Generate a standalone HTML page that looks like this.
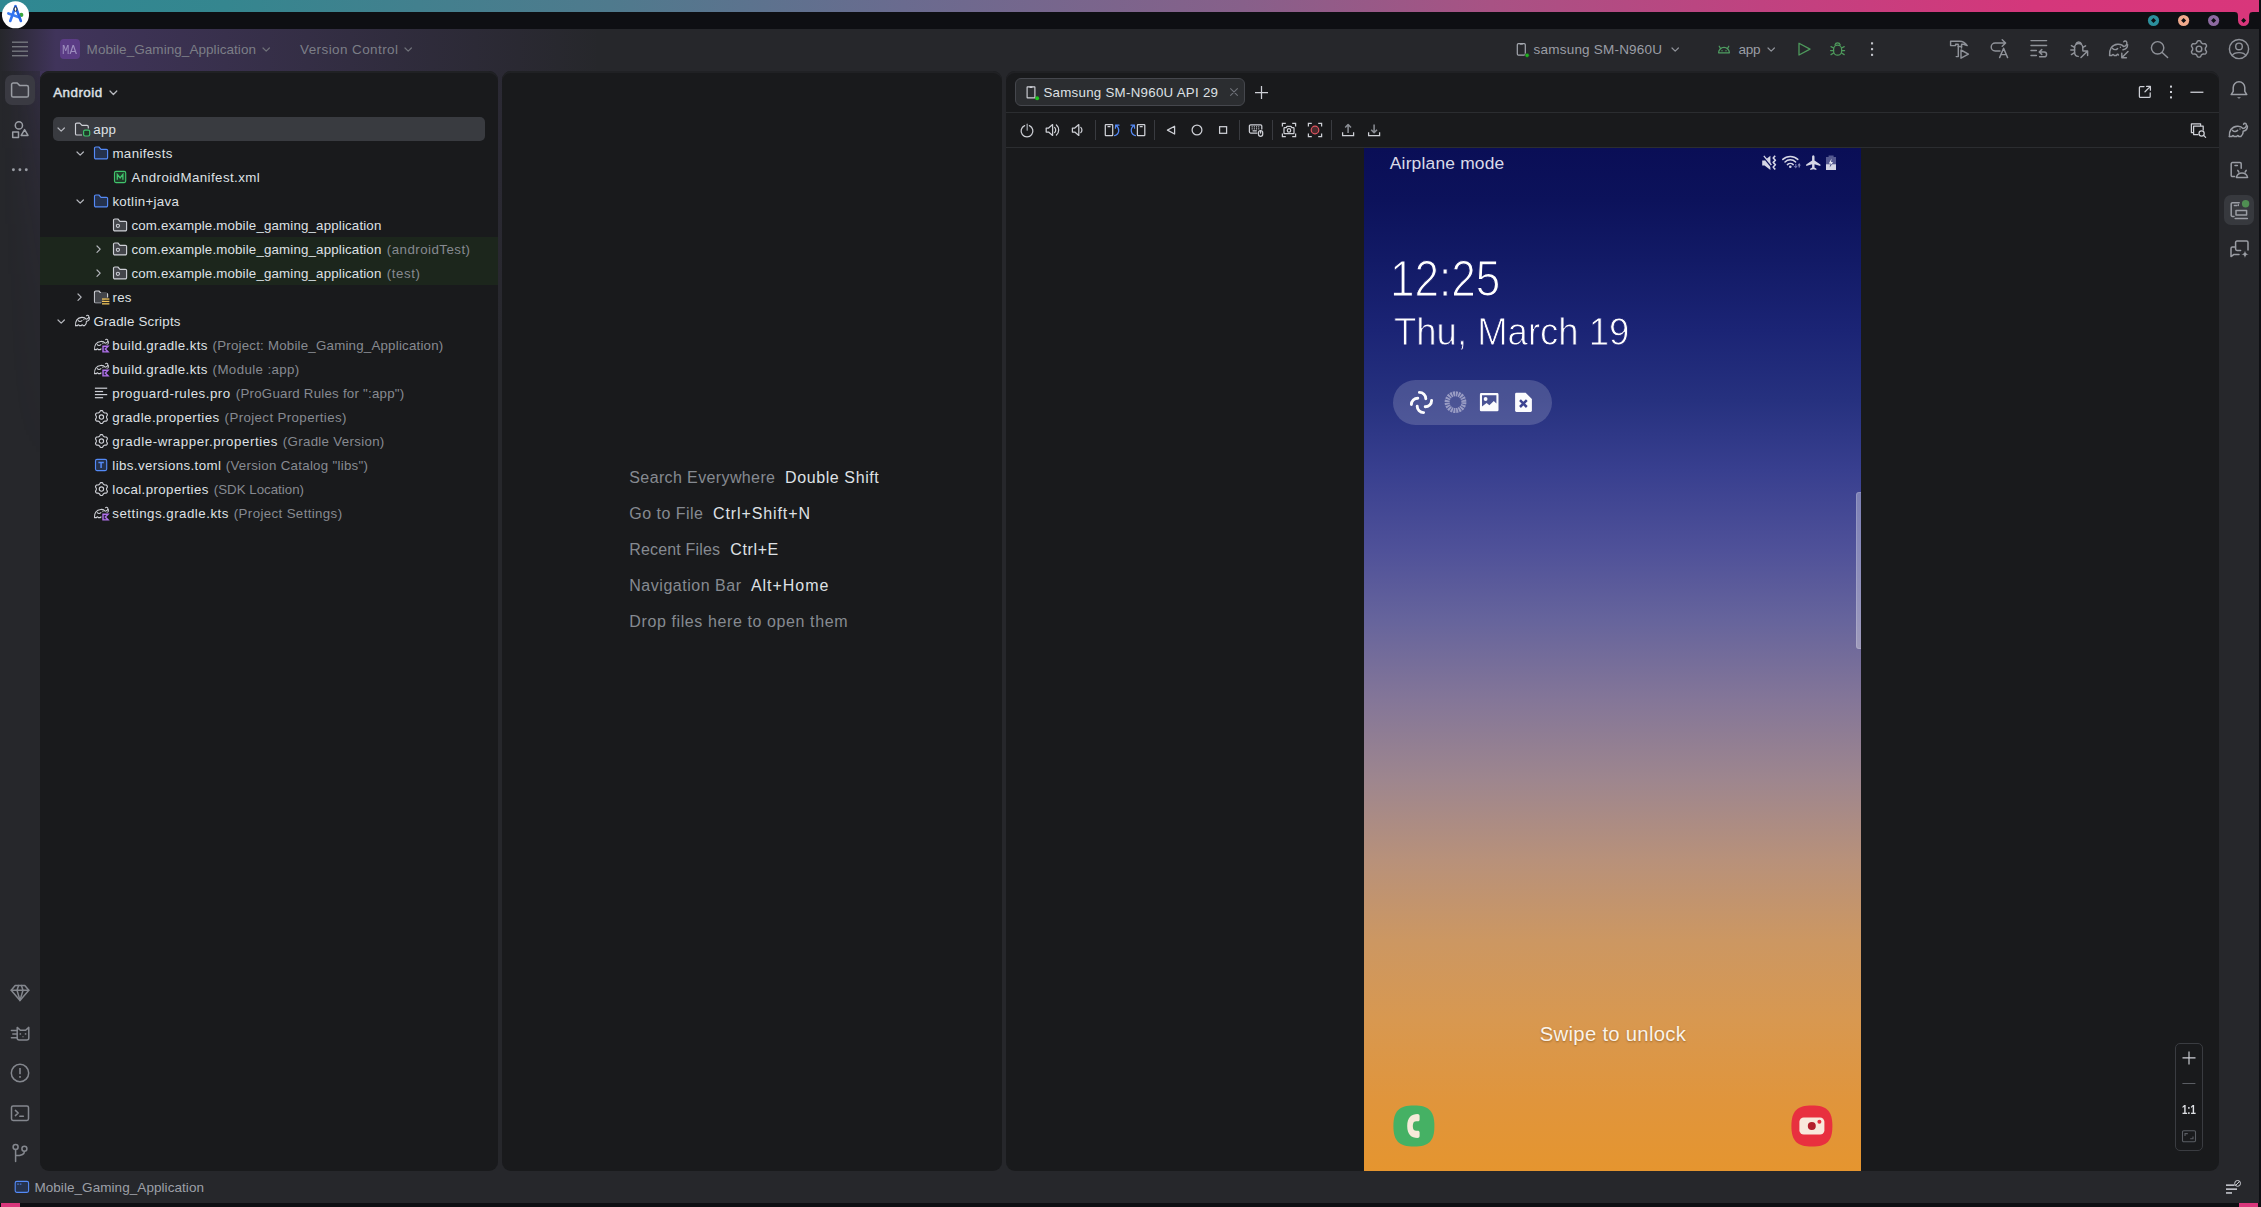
<!DOCTYPE html>
<html>
<head>
<meta charset="utf-8">
<title>Mobile_Gaming_Application</title>
<style>
*{box-sizing:border-box;margin:0;padding:0}
html,body{width:2261px;height:1207px;overflow:hidden;background:#26272b}
body{position:relative;font-family:"Liberation Sans",sans-serif;font-size:13.5px;color:#dfe1e5;-webkit-font-smoothing:antialiased}
.abs{position:absolute}
#topgrad{left:0;top:0;width:2259px;height:12px;background:linear-gradient(90deg,#2f8892 0%,#35868f 10%,#4f7a8d 27%,#6a6b8f 40%,#87608a 55%,#a85284 66%,#c04280 78%,#d4377b 90%,#d9367b 100%)}
#topblack{left:0;top:12px;width:2261px;height:17px;background:#0e0f13}
#rightblack{left:2259px;top:0;width:2px;height:1207px;background:#0e0f13}
#botblack{left:0;top:1203px;width:2261px;height:4px;background:#0e0f13}
#titlebar{left:0;top:29px;width:2259px;height:42px;background:#26272b;overflow:hidden}
#frame{left:0;top:29px;width:2259px;height:1174px;background:#26272b;overflow:hidden}
#purple{left:0;top:0;width:2259px;height:42px;background:linear-gradient(90deg,rgba(128,84,208,0) 0,rgba(128,84,208,.29) 56px,rgba(128,84,208,0) 600px,rgba(128,84,208,0) 100%)}
#purple2{left:40px;top:42px;width:760px;height:560px;background:radial-gradient(circle 548px at 16px -21px,rgba(128,84,208,.27) 0,rgba(128,84,208,0) 100%)}
#purple3{left:0;top:42px;width:40px;height:400px;background:linear-gradient(90deg,rgba(128,84,208,0) 0,rgba(128,84,208,.012) 25%,rgba(128,84,208,.042) 50%,rgba(128,84,208,.09) 75%,rgba(128,84,208,.15) 100%);-webkit-mask-image:linear-gradient(180deg,#000 0,rgba(0,0,0,.71) 38px,rgba(0,0,0,.5) 76px,rgba(0,0,0,.25) 152px,rgba(0,0,0,.12) 230px,transparent 400px);mask-image:linear-gradient(180deg,#000 0,rgba(0,0,0,.71) 38px,rgba(0,0,0,.5) 76px,rgba(0,0,0,.25) 152px,rgba(0,0,0,.12) 230px,transparent 400px)}
.panel{background:#191a1c;border-radius:9px;top:71px;height:1100px;overflow:hidden;box-shadow:inset 0 2px 0 #202124}
#pLeft{left:40px;width:458px}
#pMid{left:502px;width:500px}
#pRight{left:1006px;width:1213px}
.t{position:absolute;white-space:pre;line-height:20px;height:20px}
.g{color:#868a91}
svg{position:absolute;overflow:visible}
</style>
</head>
<body>
<div id="frame" class="abs"><div id="purple" class="abs"></div><div id="purple2" class="abs"></div><div id="purple3" class="abs"></div></div>
<div id="topgrad" class="abs"></div>
<div id="topblack" class="abs"></div>
<div id="rightblack" class="abs"></div>
<div id="botblack" class="abs"></div>

<!-- PANELS -->
<div id="pLeft" class="abs panel"></div>
<div id="pMid" class="abs panel"></div>
<div id="pRight" class="abs panel"></div>

<!--TITLEBAR-->
<svg style="left:1px;top:0px;" width="30" height="30" viewBox="0 0 30 30" fill="none">
<circle cx="14.5" cy="14.8" r="13.55" fill="#fff"/>
<circle cx="20.3" cy="14.9" r="2.1" fill="#3aa63c"/>
<path d="M7.4 13.5 L18 17.2" stroke="#3b7df3" stroke-width="2.7" stroke-linecap="round"/>
<path d="M14.5 6.4 L9.3 20.9" stroke="#3274f0" stroke-width="2.7" stroke-linecap="round"/>
<path d="M14.5 6.4 L19.8 20.9" stroke="#2766e6" stroke-width="2.7" stroke-linecap="round"/>
<path d="M14.5 4.6 L13.3 7.4 H15.7 Z" fill="#2f6fed"/>
<ellipse cx="14.5" cy="9.1" rx="1.45" ry="2.1" fill="#fff" stroke="#20242f" stroke-width="1"/>
</svg>
<svg style="left:2140px;top:12px;" width="119" height="17" viewBox="0 0 119 17" fill="none"><circle cx="13.5" cy="8.5" r="5.6" fill="#2b8f9c"/><path d="M13.5 6.0 L16.0 8.5 L13.5 11.0 L11.0 8.5 Z" fill="#0e0f13"/><circle cx="43.6" cy="8.5" r="5.6" fill="#f0a98c"/><path d="M43.6 6.0 L46.1 8.5 L43.6 11.0 L41.1 8.5 Z" fill="#0e0f13"/><circle cx="73.6" cy="8.5" r="5.6" fill="#8d69a0"/><path d="M73.6 6.0 L76.1 8.5 L73.6 11.0 L71.1 8.5 Z" fill="#0e0f13"/><path d="M94.6 0 C98.6 0 98 3 98 8.5 A5.6 5.6 0 0 0 109.2 8.5 C109.2 3 108.6 0 112.8 0 Z" fill="#d9367b"/><path d="M103.6 6.0 L106.1 8.5 L103.6 11.0 L101.1 8.5 Z" fill="#0e0f13"/></svg>
<svg style="left:12px;top:40px;" width="16" height="18" viewBox="0 0 16 18" fill="none"><rect x="0" y="1.5" width="16" height="1.4" fill="#75777e"/><rect x="0" y="6.0" width="16" height="1.4" fill="#75777e"/><rect x="0" y="10.5" width="16" height="1.4" fill="#75777e"/><rect x="0" y="15.0" width="16" height="1.4" fill="#75777e"/></svg>
<div class="abs" style="left:60px;top:39px;width:20px;height:20px;border-radius:4px;background:#5b3c85"></div>
<div class="t" style="left:62.0px;top:39.7px;font-size:13.3px;line-height:21px;height:21px;color:#9c8cbd;font-family:'Liberation Mono',monospace;transform-origin:0 50%;transform:scaleX(.93)">MA</div>
<div class="t" style="left:86.6px;top:39.5px;font-size:13.5px;line-height:20px;height:20px;color:#7c7e87;letter-spacing:0.054px;">Mobile_Gaming_Application</div>
<svg style="left:262.3px;top:46.9px;" width="8.4" height="5.2" viewBox="0 0 8.4 5.2" fill="none"><path d="M1 1 L4.2 4.2 L7.4 1" stroke="#6f7179" stroke-width="1.2" stroke-linecap="round" stroke-linejoin="round"/></svg>
<div class="t" style="left:300.0px;top:39.5px;font-size:13.5px;line-height:20px;height:20px;color:#7c7e87;letter-spacing:0.407px;">Version Control</div>
<svg style="left:403.8px;top:46.9px;" width="8.4" height="5.2" viewBox="0 0 8.4 5.2" fill="none"><path d="M1 1 L4.2 4.2 L7.4 1" stroke="#6f7179" stroke-width="1.2" stroke-linecap="round" stroke-linejoin="round"/></svg>
<svg style="left:1515px;top:41px;" width="16" height="18" viewBox="0 0 16 18" fill="none">
<rect x="2.3" y="2.6" width="8" height="11.6" rx="1.2" stroke="#a4a7ae" stroke-width="1.2"/>
<path d="M4.8 2.9 H7.8" stroke="#a4a7ae" stroke-width="1.6"/>
<circle cx="12.1" cy="14.3" r="2.1" fill="#1fb11f" stroke="#26282b" stroke-width="0.5"/></svg>
<div class="t" style="left:1533.6px;top:39.5px;font-size:13.5px;line-height:20px;height:20px;color:#9b9ea6;letter-spacing:0.207px;">samsung SM-N960U</div>
<svg style="left:1670.8px;top:46.699999999999996px;" width="8.4" height="5.2" viewBox="0 0 8.4 5.2" fill="none"><path d="M1 1 L4.2 4.2 L7.4 1" stroke="#8f9299" stroke-width="1.2" stroke-linecap="round" stroke-linejoin="round"/></svg>
<svg style="left:1716px;top:42px;" width="16" height="14" viewBox="0 0 16 14" fill="none">
<path d="M2.6 10.8 A5.4 5.4 0 0 1 13.4 10.8 Z" stroke="#4f9e62" stroke-width="1.2" stroke-linejoin="round"/>
<path d="M4.6 6.6 L3.2 4.2 M11.4 6.6 L12.8 4.2" stroke="#4f9e62" stroke-width="1.2" stroke-linecap="round"/>
<circle cx="6" cy="8.7" r=".7" fill="#4f9e62"/><circle cx="10" cy="8.7" r=".7" fill="#4f9e62"/></svg>
<div class="t" style="left:1738.6px;top:39.5px;font-size:13.5px;line-height:20px;height:20px;color:#9b9ea6;letter-spacing:-0.312px;">app</div>
<svg style="left:1766.8px;top:46.699999999999996px;" width="8.4" height="5.2" viewBox="0 0 8.4 5.2" fill="none"><path d="M1 1 L4.2 4.2 L7.4 1" stroke="#8f9299" stroke-width="1.2" stroke-linecap="round" stroke-linejoin="round"/></svg>
<svg style="left:1796px;top:40px;" width="18" height="18" viewBox="0 0 18 18" fill="none"><path d="M3 3.2 V15 L14 9.1 Z" stroke="#4e9a5c" stroke-width="1.3" stroke-linejoin="round"/></svg>
<svg style="left:1828px;top:39px;" width="20" height="20" viewBox="0 0 20 20" fill="none">
<g stroke="#4e9a5c" stroke-width="1.25" stroke-linecap="round" fill="none">
<rect x="5.6" y="6.2" width="8" height="10" rx="4"/>
<path d="M7 5.9 A2.7 2.7 0 0 1 12.2 5.9"/>
<path d="M5.6 9 L3 7.6 M5.6 11.6 H2.6 M5.6 14 L3 15.6 M13.6 9 L16.2 7.6 M13.6 11.6 H16.6 M13.6 14 L16.2 15.6"/>
</g></svg>
<svg style="left:1870px;top:41px;" width="4" height="16" viewBox="0 0 4 16" fill="none"><rect x="1" y="1.3" width="2.1" height="2.1" fill="#c3c5cb"/><rect x="1" y="7.1" width="2.1" height="2.1" fill="#c3c5cb"/><rect x="1" y="12.8" width="2.1" height="2.1" fill="#c3c5cb"/></svg>
<svg style="left:1949px;top:39px;" width="22" height="21" viewBox="0 0 22 21" fill="none"><g stroke="#8f9299" stroke-width="1.45" stroke-linecap="round" stroke-linejoin="round" fill="none">
<path d="M1.6 2.2 H10.6 C13.6 2.2 16.4 3.8 18.2 6.6 L14.6 5.2 H12.6 V7.4 H9.2 V5.2 H6.6 V6.6 H1.6 Z"/>
<path d="M9.3 7.4 V17.6 H7.2 M12.5 7.4 V9"/>
<path d="M12 11 V19.2 L19.4 15.1 Z"/>
</g></svg>
<svg style="left:1989px;top:38px;" width="22" height="22" viewBox="0 0 22 22" fill="none"><g stroke="#8f9299" stroke-width="1.45" stroke-linecap="round" stroke-linejoin="round" fill="none">
<path d="M11 13 H6.2 A4 4 0 0 1 6.2 5 H16.4 M13.2 1.8 L16.6 5 L13.2 8.2"/>
<path d="M10.6 19.6 L14.6 10.2 L18.6 19.6 M12 16.6 H17.2"/>
</g></svg>
<svg style="left:2030px;top:39px;" width="20" height="20" viewBox="0 0 20 20" fill="none"><g stroke="#8f9299" stroke-width="1.45" stroke-linecap="round" stroke-linejoin="round" fill="none">
<path d="M1 1.6 H16.6 M1 6.4 H16.6 M1 11.4 H6.4 M1 16.4 H6.4"/>
<path d="M9.4 13 H14.2 A2.4 2.4 0 0 1 14.2 17.8 H9.6 M11.8 10.6 L9.2 13 L11.8 15.4"/>
</g></svg>
<svg style="left:2068px;top:38px;" width="22" height="22" viewBox="0 0 22 22" fill="none"><g stroke="#8f9299" stroke-width="1.45" stroke-linecap="round" stroke-linejoin="round" fill="none">
<path d="M14.8 12.2 V9.6 A4.1 4.1 0 0 0 6.6 9.6 V14.4 A4.1 4.1 0 0 0 10.2 18.4"/>
<path d="M8 6 A2.8 2.8 0 0 1 13.4 6"/>
<path d="M6.6 9.4 L3.4 7.6 M6.6 12 H2.8 M6.6 14.6 L3.4 16.6 M14.8 9.4 L17.6 7.8"/>
<path d="M13 19.6 L19.4 13.2 M15 13 H19.6 V17.6"/>
</g></svg>
<svg style="left:2107px;top:38px;" width="24" height="22" viewBox="0 0 24 22" fill="none"><g stroke="#8f9299" stroke-width="1.45" stroke-linecap="round" stroke-linejoin="round" fill="none">
<path d="M2.6 17.4 C2 11.6 4.6 6.6 10.6 6.2 C13.4 6 15.6 7 16.6 8.6 C18.6 8.2 20.4 6.6 19.8 4.4 C19.4 2.8 17.4 2.6 16.8 3.8"/>
<path d="M2.6 17.4 H5 C5.4 16 6.6 16 7 17.4 H9.6 C10 16 11 16 11.4 17"/>
<path d="M20.6 6.6 C20.6 9.6 18.8 11.4 16 11.8"/>
<path d="M5.6 10.4 C7 12 9 12 10.6 10.6"/>
<path d="M21 13.6 L15 19.6 M14.8 15.2 V19.8 H19.4"/>
</g><circle cx="13.4" cy="9.2" r=".7" fill="#8f9299"/></svg>
<svg style="left:2149px;top:39px;" width="22" height="22" viewBox="0 0 22 22" fill="none"><g stroke="#8f9299" stroke-width="1.45" stroke-linecap="round" stroke-linejoin="round" fill="none"><circle cx="8.6" cy="8.8" r="6.2"/><path d="M13.2 13.4 L18.6 18.6"/></g></svg>
<svg style="left:2189px;top:39px;" width="20" height="20" viewBox="0 0 20 20" fill="none"><g stroke="#8f9299" stroke-width="1.45" stroke-linecap="round" stroke-linejoin="round" fill="none"><path d="M16.35 9.90 L16.37 9.48 L16.43 9.05 L16.55 8.60 L17.05 8.01 L17.50 7.36 L17.50 6.80 L17.37 6.27 L17.14 5.78 L16.83 5.34 L16.44 4.96 L15.95 4.68 L15.16 4.74 L14.41 4.88 L13.95 4.75 L13.55 4.59 L13.18 4.40 L12.82 4.18 L12.48 3.91 L12.15 3.57 L11.89 2.85 L11.54 2.14 L11.06 1.86 L10.54 1.70 L10.00 1.65 L9.46 1.70 L8.94 1.86 L8.46 2.14 L8.11 2.85 L7.85 3.57 L7.52 3.91 L7.18 4.18 L6.83 4.40 L6.45 4.59 L6.05 4.75 L5.59 4.88 L4.84 4.74 L4.05 4.68 L3.56 4.96 L3.17 5.34 L2.86 5.78 L2.63 6.27 L2.50 6.80 L2.50 7.36 L2.95 8.01 L3.45 8.60 L3.57 9.05 L3.63 9.48 L3.65 9.90 L3.63 10.32 L3.57 10.75 L3.45 11.20 L2.95 11.79 L2.50 12.44 L2.50 13.00 L2.63 13.53 L2.86 14.02 L3.17 14.46 L3.56 14.84 L4.05 15.12 L4.84 15.06 L5.59 14.92 L6.05 15.05 L6.45 15.21 L6.82 15.40 L7.18 15.62 L7.52 15.89 L7.85 16.23 L8.11 16.95 L8.46 17.66 L8.94 17.94 L9.46 18.10 L10.00 18.15 L10.54 18.10 L11.06 17.94 L11.54 17.66 L11.89 16.95 L12.15 16.23 L12.48 15.89 L12.82 15.62 L13.18 15.40 L13.55 15.21 L13.95 15.05 L14.41 14.92 L15.16 15.06 L15.95 15.12 L16.44 14.84 L16.83 14.46 L17.14 14.03 L17.37 13.53 L17.50 13.00 L17.50 12.44 L17.05 11.79 L16.55 11.20 L16.43 10.75 L16.37 10.32 Z" stroke-linejoin="round"/><circle cx="10" cy="9.9" r="2.8"/></g></svg>
<svg style="left:2228px;top:38px;" width="22" height="22" viewBox="0 0 22 22" fill="none"><g stroke="#8f9299" stroke-width="1.45" stroke-linecap="round" stroke-linejoin="round" fill="none"><circle cx="11" cy="11" r="9.6"/><circle cx="11" cy="8.4" r="3.3"/><path d="M4.2 17.6 C6 13.6 16 13.6 17.8 17.6"/></g></svg>
<!--LEFTSTRIPE-->
<div class="abs" style="left:5px;top:75px;width:30px;height:30px;border-radius:7px;background:#3a3a42"></div>
<svg style="left:10px;top:81px;" width="20" height="18" viewBox="0 0 20 18" fill="none"><g stroke="#9a9da4" stroke-width="1.5" stroke-linecap="round" stroke-linejoin="round" fill="none"><path d="M1.6 3.6 A1.6 1.6 0 0 1 3.2 2 H7.2 L9.8 4.6 H16.8 A1.6 1.6 0 0 1 18.4 6.2 V14.4 A1.6 1.6 0 0 1 16.8 16 H3.2 A1.6 1.6 0 0 1 1.6 14.4 Z"/></g></svg>
<svg style="left:10px;top:120px;" width="20" height="20" viewBox="0 0 20 20" fill="none"><g stroke="#9a9da4" stroke-width="1.5" stroke-linecap="round" stroke-linejoin="round" fill="none"><circle cx="8.9" cy="5.4" r="3.6"/><rect x="2.7" y="11.9" width="5.8" height="5.6"/><path d="M14.6 9.6 L18 15.4 H11.2 Z"/></g></svg>
<svg style="left:10px;top:166px;" width="20" height="8" viewBox="0 0 20 8" fill="none"><circle cx="3.4" cy="3.8" r="1.45" fill="#9a9da4"/><circle cx="9.9" cy="3.8" r="1.45" fill="#9a9da4"/><circle cx="16.3" cy="3.8" r="1.45" fill="#9a9da4"/></svg>
<svg style="left:10px;top:983px;" width="20" height="20" viewBox="0 0 20 20" fill="none"><g stroke="#84878e" stroke-width="1.5" stroke-linecap="round" stroke-linejoin="round" fill="none"><path d="M5.2 2.4 H14.8 L18.8 7.2 L10 17.6 L1.2 7.2 Z"/><path d="M1.2 7.2 H18.8 M7 7.2 L10 17.4 L13 7.2 M7 7.2 L8.6 2.4 M13 7.2 L11.4 2.4"/></g></svg>
<svg style="left:10px;top:1025px;" width="20" height="18" viewBox="0 0 20 18" fill="none"><g stroke="#84878e" stroke-width="1.5" stroke-linecap="round" stroke-linejoin="round" fill="none"><path d="M7.2 2.4 L10.4 5.2 H15.6 L18.8 2.4 V13 A2 2 0 0 1 16.8 15 H9.2 A2 2 0 0 1 7.2 13 Z"/><path d="M1.4 5.4 H7 M2.8 9 H7 M1.4 12.7 H7"/></g><rect x="9.6" y="8.2" width="1.5" height="1.5" fill="#84878e"/><rect x="14.8" y="8.2" width="1.5" height="1.5" fill="#84878e"/><path d="M11.8 11.4 H14.2 L13 12.6 Z" fill="#84878e"/></svg>
<svg style="left:10px;top:1063px;" width="20" height="20" viewBox="0 0 20 20" fill="none"><g stroke="#84878e" stroke-width="1.5" stroke-linecap="round" stroke-linejoin="round" fill="none"><circle cx="10" cy="10" r="8.7"/></g><rect x="9.2" y="5" width="1.6" height="6.2" fill="#84878e"/><rect x="9.2" y="13" width="1.6" height="1.8" fill="#84878e"/></svg>
<svg style="left:10px;top:1104px;" width="20" height="18" viewBox="0 0 20 18" fill="none"><g stroke="#84878e" stroke-width="1.5" stroke-linecap="round" stroke-linejoin="round" fill="none"><rect x="1.5" y="2" width="17" height="14.4" rx="1.6"/><path d="M5.4 6.4 L8.2 9 L5.4 11.6 M9.8 12.2 H13.4"/></g></svg>
<svg style="left:10px;top:1143px;" width="20" height="20" viewBox="0 0 20 20" fill="none"><g stroke="#84878e" stroke-width="1.5" stroke-linecap="round" stroke-linejoin="round" fill="none"><circle cx="5.6" cy="4" r="2.5"/><circle cx="14.4" cy="5.8" r="2.5"/><path d="M5.6 6.6 V18.4 M14.4 8.4 C14.4 11.6 12 12.6 5.8 12.6"/></g></svg>
<!--PROJECT-->
<div class="t" style="left:53.2px;top:82.5px;font-size:13.4px;line-height:20px;height:20px;color:#dfe1e5;letter-spacing:0.468px;-webkit-text-stroke:.45px #dfe1e5;">Android</div>
<svg style="left:108.6px;top:90.25px;" width="8.8" height="5.5" viewBox="0 0 8.8 5.5" fill="none"><path d="M1 1 L4.4 4.5 L7.8 1" stroke="#b9bbc1" stroke-width="1.25" stroke-linecap="round" stroke-linejoin="round"/></svg>
<div class="abs" style="left:53px;top:117px;width:432px;height:24px;border-radius:5px;background:#393b40"></div>
<div class="abs" style="left:40px;top:237px;width:458px;height:48px;background:#1c261c"></div>
<svg style="left:56.8px;top:126.6px;" width="8.4" height="5.2" viewBox="0 0 8.4 5.2" fill="none"><path d="M1 1 L4.2 4.2 L7.4 1" stroke="#b4b6bc" stroke-width="1.2" stroke-linecap="round" stroke-linejoin="round"/></svg>
<svg style="left:73.5px;top:121px;" width="18" height="16" viewBox="0 0 18 16" fill="none"><path d="M8 14 H2.8 A1.3 1.3 0 0 1 1.5 12.7 V3.4 A1.3 1.3 0 0 1 2.8 2.1 H5.8 L8 4.4 H13 A1.3 1.3 0 0 1 14.3 5.7 V7.6" stroke="#ced0d6" stroke-width="1.15" stroke-linejoin="round" fill="none"/>
<rect x="9.6" y="9.1" width="6.1" height="5.9" rx="1.4" fill="#1f3a29" stroke="#40c46c" stroke-width="1.15"/></svg>
<div class="t" style="left:93.3px;top:120.0px;font-size:13.3px;line-height:20px;height:20px;color:#dfe1e5;letter-spacing:0.254px;">app</div>
<svg style="left:75.8px;top:150.6px;" width="8.4" height="5.2" viewBox="0 0 8.4 5.2" fill="none"><path d="M1 1 L4.2 4.2 L7.4 1" stroke="#b4b6bc" stroke-width="1.2" stroke-linecap="round" stroke-linejoin="round"/></svg>
<svg style="left:92.5px;top:145px;" width="16" height="16" viewBox="0 0 16 16" fill="none"><path d="M1.5 3.3 A1.3 1.3 0 0 1 2.8 2 H5.9 L8 4.3 H13.3 A1.3 1.3 0 0 1 14.6 5.6 V12.6 A1.3 1.3 0 0 1 13.3 13.9 H2.8 A1.3 1.3 0 0 1 1.5 12.6 Z" fill="#25324d" stroke="#548af7" stroke-width="1.15" stroke-linejoin="round"/></svg>
<div class="t" style="left:112.4px;top:144.0px;font-size:13.3px;line-height:20px;height:20px;color:#dfe1e5;letter-spacing:0.386px;">manifests</div>
<svg style="left:111.5px;top:169px;" width="16" height="16" viewBox="0 0 16 16" fill="none"><rect x="2.5" y="2.4" width="11.2" height="11.2" rx="1.5" fill="#1f3a29" stroke="#40c46c" stroke-width="1.15"/><path d="M5.3 10.8 V5.4 L8.1 9 L10.9 5.4 V10.8" stroke="#40c46c" stroke-width="1.3" stroke-linejoin="miter" fill="none"/></svg>
<div class="t" style="left:131.6px;top:168.0px;font-size:13.3px;line-height:20px;height:20px;color:#dfe1e5;letter-spacing:0.428px;">AndroidManifest.xml</div>
<svg style="left:75.8px;top:198.6px;" width="8.4" height="5.2" viewBox="0 0 8.4 5.2" fill="none"><path d="M1 1 L4.2 4.2 L7.4 1" stroke="#b4b6bc" stroke-width="1.2" stroke-linecap="round" stroke-linejoin="round"/></svg>
<svg style="left:92.5px;top:193px;" width="16" height="16" viewBox="0 0 16 16" fill="none"><path d="M1.5 3.3 A1.3 1.3 0 0 1 2.8 2 H5.9 L8 4.3 H13.3 A1.3 1.3 0 0 1 14.6 5.6 V12.6 A1.3 1.3 0 0 1 13.3 13.9 H2.8 A1.3 1.3 0 0 1 1.5 12.6 Z" fill="#25324d" stroke="#548af7" stroke-width="1.15" stroke-linejoin="round"/></svg>
<div class="t" style="left:112.4px;top:192.0px;font-size:13.3px;line-height:20px;height:20px;color:#dfe1e5;letter-spacing:0.328px;">kotlin+java</div>
<svg style="left:111.5px;top:217px;" width="16" height="16" viewBox="0 0 16 16" fill="none"><path d="M1.5 3.3 A1.3 1.3 0 0 1 2.8 2 H5.9 L8 4.3 H13.3 A1.3 1.3 0 0 1 14.6 5.6 V12.6 A1.3 1.3 0 0 1 13.3 13.9 H2.8 A1.3 1.3 0 0 1 1.5 12.6 Z" fill="#43454a" stroke="#ced0d6" stroke-width="1.15" stroke-linejoin="round"/><circle cx="5.9" cy="8.8" r="1.6" stroke="#ced0d6" stroke-width="1.05"/></svg>
<div class="t" style="left:131.5px;top:216.0px;font-size:13.3px;line-height:20px;height:20px;color:#dfe1e5;letter-spacing:0.164px;">com.example.mobile_gaming_application</div>
<svg style="left:96.0px;top:244.8px;" width="5.2" height="8.4" viewBox="0 0 5.2 8.4" fill="none"><path d="M1 1 L4.2 4.2 L1 7.4" stroke="#b4b6bc" stroke-width="1.2" stroke-linecap="round" stroke-linejoin="round"/></svg>
<svg style="left:111.5px;top:241px;" width="16" height="16" viewBox="0 0 16 16" fill="none"><path d="M1.5 3.3 A1.3 1.3 0 0 1 2.8 2 H5.9 L8 4.3 H13.3 A1.3 1.3 0 0 1 14.6 5.6 V12.6 A1.3 1.3 0 0 1 13.3 13.9 H2.8 A1.3 1.3 0 0 1 1.5 12.6 Z" fill="#43454a" stroke="#ced0d6" stroke-width="1.15" stroke-linejoin="round"/><circle cx="5.9" cy="8.8" r="1.6" stroke="#ced0d6" stroke-width="1.05"/></svg>
<div class="t" style="left:131.5px;top:240.0px;font-size:13.3px;line-height:20px;height:20px;color:#dfe1e5;letter-spacing:0.164px;">com.example.mobile_gaming_application</div>
<div class="t" style="left:386.8px;top:240.0px;font-size:13.3px;line-height:20px;height:20px;color:#878a91;letter-spacing:0.465px;">(androidTest)</div>
<svg style="left:96.0px;top:268.8px;" width="5.2" height="8.4" viewBox="0 0 5.2 8.4" fill="none"><path d="M1 1 L4.2 4.2 L1 7.4" stroke="#b4b6bc" stroke-width="1.2" stroke-linecap="round" stroke-linejoin="round"/></svg>
<svg style="left:111.5px;top:265px;" width="16" height="16" viewBox="0 0 16 16" fill="none"><path d="M1.5 3.3 A1.3 1.3 0 0 1 2.8 2 H5.9 L8 4.3 H13.3 A1.3 1.3 0 0 1 14.6 5.6 V12.6 A1.3 1.3 0 0 1 13.3 13.9 H2.8 A1.3 1.3 0 0 1 1.5 12.6 Z" fill="#43454a" stroke="#ced0d6" stroke-width="1.15" stroke-linejoin="round"/><circle cx="5.9" cy="8.8" r="1.6" stroke="#ced0d6" stroke-width="1.05"/></svg>
<div class="t" style="left:131.5px;top:264.0px;font-size:13.3px;line-height:20px;height:20px;color:#dfe1e5;letter-spacing:0.164px;">com.example.mobile_gaming_application</div>
<div class="t" style="left:386.8px;top:264.0px;font-size:13.3px;line-height:20px;height:20px;color:#878a91;letter-spacing:0.581px;">(test)</div>
<svg style="left:77.4px;top:292.8px;" width="5.2" height="8.4" viewBox="0 0 5.2 8.4" fill="none"><path d="M1 1 L4.2 4.2 L1 7.4" stroke="#b4b6bc" stroke-width="1.2" stroke-linecap="round" stroke-linejoin="round"/></svg>
<svg style="left:92.5px;top:289px;" width="18" height="16" viewBox="0 0 18 16" fill="none"><path d="M8.2 13.7 H2.8 A1.3 1.3 0 0 1 1.5 12.4 V3.3 A1.3 1.3 0 0 1 2.8 2 H5.9 L8 4.3 H13.3 A1.3 1.3 0 0 1 14.6 5.6 V8.4" fill="#43454a" stroke="#ced0d6" stroke-width="1.15" stroke-linejoin="round"/><path d="M1.9 4 H14 V9 H9 V13.4 H1.9Z" fill="#43454a"/><g fill="#f2c55c"><rect x="9" y="9.4" width="7.4" height="1.3"/><rect x="9" y="11.8" width="7.4" height="1.3"/><rect x="9" y="14.2" width="7.4" height="1.3"/></g></svg>
<div class="t" style="left:112.4px;top:288.0px;font-size:13.3px;line-height:20px;height:20px;color:#dfe1e5;letter-spacing:0.312px;">res</div>
<svg style="left:56.8px;top:318.59999999999997px;" width="8.4" height="5.2" viewBox="0 0 8.4 5.2" fill="none"><path d="M1 1 L4.2 4.2 L7.4 1" stroke="#b4b6bc" stroke-width="1.2" stroke-linecap="round" stroke-linejoin="round"/></svg>
<svg style="left:73.5px;top:313px;" width="17" height="16" viewBox="0 0 17 16" fill="none"><g stroke="#ced0d6" stroke-width="1.1" stroke-linecap="round" stroke-linejoin="round" fill="none">
<path d="M1.6 12.6 C1.2 8.2 3.2 4.6 7.8 4.4 C9.8 4.3 11.4 5 12.2 6.2 C13.8 6 15.2 4.8 14.8 3.2 C14.5 2 13 1.9 12.6 2.8"/>
<path d="M1.6 12.6 H3.6 C3.9 11.5 4.9 11.5 5.2 12.6 H7.4 C7.7 11.5 8.7 11.5 9 12.6 H10.6 C12 11.4 12.6 10 12.4 8.4 C14.4 8 15.6 6.6 15.4 4.6"/>
<path d="M4.2 7.6 C5.2 8.8 6.8 8.8 8 7.6"/></g><circle cx="9.9" cy="6.6" r=".6" fill="#ced0d6"/></svg>
<div class="t" style="left:93.4px;top:312.0px;font-size:13.3px;line-height:20px;height:20px;color:#dfe1e5;letter-spacing:0.218px;">Gradle Scripts</div>
<svg style="left:92.5px;top:337px;" width="18" height="17" viewBox="0 0 18 17" fill="none"><g stroke="#ced0d6" stroke-width="1.05" stroke-linecap="round" stroke-linejoin="round" fill="none">
<path d="M1.6 12.6 C1.2 8.2 3.2 4.6 7.8 4.4 C9.8 4.3 11.4 5 12.2 6.2 C13.8 6 15.2 4.8 14.8 3.2 C14.5 2 13 1.9 12.6 2.8"/>
<path d="M1.6 12.6 H3.6 C3.9 11.5 4.9 11.5 5.2 12.6 H7.4 C7.7 11.5 8.7 11.5 9 12.6 H10.6 C12 11.4 12.6 10 12.4 8.4 C14.4 8 15.6 6.6 15.4 4.6"/>
<path d="M4.2 7.6 C5.2 8.8 6.8 8.8 8 7.6"/></g><circle cx="9.9" cy="6.6" r=".6" fill="#ced0d6"/><rect x="8.4" y="7.6" width="9" height="9.4" fill="#191a1c"/><path d="M9.3 8.6 H16.7 L13.3 12.1 L16.7 15.6 H9.3 Z" fill="#b071ea"/><path d="M10.7 10 H13.5 L11.5 12.1 L13.5 14.2 H10.7 Z" fill="#2b2140"/></svg>
<div class="t" style="left:112.3px;top:336.0px;font-size:13.3px;line-height:20px;height:20px;color:#dfe1e5;letter-spacing:0.376px;">build.gradle.kts</div>
<div class="t" style="left:212.6px;top:336.0px;font-size:13.3px;line-height:20px;height:20px;color:#878a91;letter-spacing:0.213px;">(Project: Mobile_Gaming_Application)</div>
<svg style="left:92.5px;top:361px;" width="18" height="17" viewBox="0 0 18 17" fill="none"><g stroke="#ced0d6" stroke-width="1.05" stroke-linecap="round" stroke-linejoin="round" fill="none">
<path d="M1.6 12.6 C1.2 8.2 3.2 4.6 7.8 4.4 C9.8 4.3 11.4 5 12.2 6.2 C13.8 6 15.2 4.8 14.8 3.2 C14.5 2 13 1.9 12.6 2.8"/>
<path d="M1.6 12.6 H3.6 C3.9 11.5 4.9 11.5 5.2 12.6 H7.4 C7.7 11.5 8.7 11.5 9 12.6 H10.6 C12 11.4 12.6 10 12.4 8.4 C14.4 8 15.6 6.6 15.4 4.6"/>
<path d="M4.2 7.6 C5.2 8.8 6.8 8.8 8 7.6"/></g><circle cx="9.9" cy="6.6" r=".6" fill="#ced0d6"/><rect x="8.4" y="7.6" width="9" height="9.4" fill="#191a1c"/><path d="M9.3 8.6 H16.7 L13.3 12.1 L16.7 15.6 H9.3 Z" fill="#b071ea"/><path d="M10.7 10 H13.5 L11.5 12.1 L13.5 14.2 H10.7 Z" fill="#2b2140"/></svg>
<div class="t" style="left:112.3px;top:360.0px;font-size:13.3px;line-height:20px;height:20px;color:#dfe1e5;letter-spacing:0.376px;">build.gradle.kts</div>
<div class="t" style="left:212.6px;top:360.0px;font-size:13.3px;line-height:20px;height:20px;color:#878a91;letter-spacing:0.386px;">(Module :app)</div>
<svg style="left:92.5px;top:385px;" width="16" height="16" viewBox="0 0 16 16" fill="none"><rect x="1.9" y="2.6" width="12.3" height="1.2" fill="#ced0d6"/><rect x="1.9" y="5.9" width="8.2" height="1.2" fill="#ced0d6"/><rect x="1.9" y="9.0" width="12.3" height="1.2" fill="#ced0d6"/><rect x="1.9" y="12.1" width="8.2" height="1.2" fill="#ced0d6"/></svg>
<div class="t" style="left:112.3px;top:384.0px;font-size:13.3px;line-height:20px;height:20px;color:#dfe1e5;letter-spacing:0.499px;">proguard-rules.pro</div>
<div class="t" style="left:235.8px;top:384.0px;font-size:13.3px;line-height:20px;height:20px;color:#878a91;letter-spacing:0.228px;">(ProGuard Rules for ":app")</div>
<svg style="left:92.5px;top:409px;" width="17" height="16" viewBox="0 0 17 16" fill="none"><path d="M13.55 8.05 L13.57 7.60 L13.66 7.13 L14.05 6.55 L14.38 5.89 L14.30 5.32 L14.08 4.80 L13.74 4.35 L13.29 3.99 L12.55 3.95 L11.85 4.00 L11.40 3.84 L11.00 3.63 L10.62 3.39 L10.26 3.08 L9.95 2.45 L9.55 1.83 L9.01 1.62 L8.45 1.55 L7.89 1.62 L7.35 1.83 L6.95 2.45 L6.64 3.08 L6.28 3.39 L5.90 3.63 L5.50 3.84 L5.05 4.00 L4.35 3.95 L3.61 3.99 L3.16 4.35 L2.82 4.80 L2.60 5.32 L2.52 5.89 L2.85 6.55 L3.24 7.13 L3.33 7.60 L3.35 8.05 L3.33 8.50 L3.24 8.97 L2.85 9.55 L2.52 10.21 L2.60 10.78 L2.82 11.30 L3.16 11.75 L3.61 12.11 L4.35 12.15 L5.05 12.10 L5.50 12.26 L5.90 12.47 L6.28 12.71 L6.64 13.02 L6.95 13.65 L7.35 14.27 L7.89 14.48 L8.45 14.55 L9.01 14.48 L9.55 14.27 L9.95 13.65 L10.26 13.02 L10.62 12.71 L11.00 12.47 L11.40 12.26 L11.85 12.10 L12.55 12.15 L13.29 12.11 L13.74 11.75 L14.08 11.30 L14.30 10.78 L14.38 10.21 L14.05 9.55 L13.66 8.97 L13.57 8.50 Z" stroke="#ced0d6" stroke-width="1.15" stroke-linejoin="round"/><circle cx="8.45" cy="8.05" r="2.15" stroke="#ced0d6" stroke-width="1.15"/></svg>
<div class="t" style="left:112.3px;top:408.0px;font-size:13.3px;line-height:20px;height:20px;color:#dfe1e5;letter-spacing:0.443px;">gradle.properties</div>
<div class="t" style="left:224.6px;top:408.0px;font-size:13.3px;line-height:20px;height:20px;color:#878a91;letter-spacing:0.381px;">(Project Properties)</div>
<svg style="left:92.5px;top:433px;" width="17" height="16" viewBox="0 0 17 16" fill="none"><path d="M13.55 8.05 L13.57 7.60 L13.66 7.13 L14.05 6.55 L14.38 5.89 L14.30 5.32 L14.08 4.80 L13.74 4.35 L13.29 3.99 L12.55 3.95 L11.85 4.00 L11.40 3.84 L11.00 3.63 L10.62 3.39 L10.26 3.08 L9.95 2.45 L9.55 1.83 L9.01 1.62 L8.45 1.55 L7.89 1.62 L7.35 1.83 L6.95 2.45 L6.64 3.08 L6.28 3.39 L5.90 3.63 L5.50 3.84 L5.05 4.00 L4.35 3.95 L3.61 3.99 L3.16 4.35 L2.82 4.80 L2.60 5.32 L2.52 5.89 L2.85 6.55 L3.24 7.13 L3.33 7.60 L3.35 8.05 L3.33 8.50 L3.24 8.97 L2.85 9.55 L2.52 10.21 L2.60 10.78 L2.82 11.30 L3.16 11.75 L3.61 12.11 L4.35 12.15 L5.05 12.10 L5.50 12.26 L5.90 12.47 L6.28 12.71 L6.64 13.02 L6.95 13.65 L7.35 14.27 L7.89 14.48 L8.45 14.55 L9.01 14.48 L9.55 14.27 L9.95 13.65 L10.26 13.02 L10.62 12.71 L11.00 12.47 L11.40 12.26 L11.85 12.10 L12.55 12.15 L13.29 12.11 L13.74 11.75 L14.08 11.30 L14.30 10.78 L14.38 10.21 L14.05 9.55 L13.66 8.97 L13.57 8.50 Z" stroke="#ced0d6" stroke-width="1.15" stroke-linejoin="round"/><circle cx="8.45" cy="8.05" r="2.15" stroke="#ced0d6" stroke-width="1.15"/></svg>
<div class="t" style="left:112.3px;top:432.0px;font-size:13.3px;line-height:20px;height:20px;color:#dfe1e5;letter-spacing:0.564px;">gradle-wrapper.properties</div>
<div class="t" style="left:282.8px;top:432.0px;font-size:13.3px;line-height:20px;height:20px;color:#878a91;letter-spacing:0.311px;">(Gradle Version)</div>
<svg style="left:92.5px;top:457px;" width="16" height="16" viewBox="0 0 16 16" fill="none"><rect x="2.5" y="2.4" width="11.2" height="11.2" rx="1.5" fill="#25324d" stroke="#548af7" stroke-width="1.15"/><path d="M5.4 5.6 H10.8 M8.1 5.6 V11" stroke="#548af7" stroke-width="1.5"/></svg>
<div class="t" style="left:112.3px;top:456.0px;font-size:13.3px;line-height:20px;height:20px;color:#dfe1e5;letter-spacing:0.388px;">libs.versions.toml</div>
<div class="t" style="left:225.7px;top:456.0px;font-size:13.3px;line-height:20px;height:20px;color:#878a91;letter-spacing:0.280px;">(Version Catalog "libs")</div>
<svg style="left:92.5px;top:481px;" width="17" height="16" viewBox="0 0 17 16" fill="none"><path d="M13.55 8.05 L13.57 7.60 L13.66 7.13 L14.05 6.55 L14.38 5.89 L14.30 5.32 L14.08 4.80 L13.74 4.35 L13.29 3.99 L12.55 3.95 L11.85 4.00 L11.40 3.84 L11.00 3.63 L10.62 3.39 L10.26 3.08 L9.95 2.45 L9.55 1.83 L9.01 1.62 L8.45 1.55 L7.89 1.62 L7.35 1.83 L6.95 2.45 L6.64 3.08 L6.28 3.39 L5.90 3.63 L5.50 3.84 L5.05 4.00 L4.35 3.95 L3.61 3.99 L3.16 4.35 L2.82 4.80 L2.60 5.32 L2.52 5.89 L2.85 6.55 L3.24 7.13 L3.33 7.60 L3.35 8.05 L3.33 8.50 L3.24 8.97 L2.85 9.55 L2.52 10.21 L2.60 10.78 L2.82 11.30 L3.16 11.75 L3.61 12.11 L4.35 12.15 L5.05 12.10 L5.50 12.26 L5.90 12.47 L6.28 12.71 L6.64 13.02 L6.95 13.65 L7.35 14.27 L7.89 14.48 L8.45 14.55 L9.01 14.48 L9.55 14.27 L9.95 13.65 L10.26 13.02 L10.62 12.71 L11.00 12.47 L11.40 12.26 L11.85 12.10 L12.55 12.15 L13.29 12.11 L13.74 11.75 L14.08 11.30 L14.30 10.78 L14.38 10.21 L14.05 9.55 L13.66 8.97 L13.57 8.50 Z" stroke="#ced0d6" stroke-width="1.15" stroke-linejoin="round"/><circle cx="8.45" cy="8.05" r="2.15" stroke="#ced0d6" stroke-width="1.15"/></svg>
<div class="t" style="left:112.3px;top:480.0px;font-size:13.3px;line-height:20px;height:20px;color:#dfe1e5;letter-spacing:0.394px;">local.properties</div>
<div class="t" style="left:213.8px;top:480.0px;font-size:13.3px;line-height:20px;height:20px;color:#878a91;letter-spacing:0.001px;">(SDK Location)</div>
<svg style="left:92.5px;top:505px;" width="18" height="17" viewBox="0 0 18 17" fill="none"><g stroke="#ced0d6" stroke-width="1.05" stroke-linecap="round" stroke-linejoin="round" fill="none">
<path d="M1.6 12.6 C1.2 8.2 3.2 4.6 7.8 4.4 C9.8 4.3 11.4 5 12.2 6.2 C13.8 6 15.2 4.8 14.8 3.2 C14.5 2 13 1.9 12.6 2.8"/>
<path d="M1.6 12.6 H3.6 C3.9 11.5 4.9 11.5 5.2 12.6 H7.4 C7.7 11.5 8.7 11.5 9 12.6 H10.6 C12 11.4 12.6 10 12.4 8.4 C14.4 8 15.6 6.6 15.4 4.6"/>
<path d="M4.2 7.6 C5.2 8.8 6.8 8.8 8 7.6"/></g><circle cx="9.9" cy="6.6" r=".6" fill="#ced0d6"/><rect x="8.4" y="7.6" width="9" height="9.4" fill="#191a1c"/><path d="M9.3 8.6 H16.7 L13.3 12.1 L16.7 15.6 H9.3 Z" fill="#b071ea"/><path d="M10.7 10 H13.5 L11.5 12.1 L13.5 14.2 H10.7 Z" fill="#2b2140"/></svg>
<div class="t" style="left:112.3px;top:504.0px;font-size:13.3px;line-height:20px;height:20px;color:#dfe1e5;letter-spacing:0.495px;">settings.gradle.kts</div>
<div class="t" style="left:233.8px;top:504.0px;font-size:13.3px;line-height:20px;height:20px;color:#878a91;letter-spacing:0.370px;">(Project Settings)</div>
<!--EDITOR-->
<div class="t" style="left:629.3px;top:466.0px;font-size:16px;line-height:24px;height:24px;color:#868a91;letter-spacing:0.380px;">Search Everywhere</div>
<div class="t" style="left:785.0px;top:466.0px;font-size:16px;line-height:24px;height:24px;color:#dfe1e5;letter-spacing:0.603px;">Double Shift</div>
<div class="t" style="left:629.3px;top:502.0px;font-size:16px;line-height:24px;height:24px;color:#868a91;letter-spacing:0.482px;">Go to File</div>
<div class="t" style="left:713.0px;top:502.0px;font-size:16px;line-height:24px;height:24px;color:#dfe1e5;letter-spacing:0.896px;">Ctrl+Shift+N</div>
<div class="t" style="left:629.3px;top:538.0px;font-size:16px;line-height:24px;height:24px;color:#868a91;letter-spacing:0.161px;">Recent Files</div>
<div class="t" style="left:730.3px;top:538.0px;font-size:16px;line-height:24px;height:24px;color:#dfe1e5;letter-spacing:0.620px;">Ctrl+E</div>
<div class="t" style="left:629.3px;top:574.0px;font-size:16px;line-height:24px;height:24px;color:#868a91;letter-spacing:0.519px;">Navigation Bar</div>
<div class="t" style="left:751.0px;top:574.0px;font-size:16px;line-height:24px;height:24px;color:#dfe1e5;letter-spacing:0.943px;">Alt+Home</div>
<div class="t" style="left:629.3px;top:610.0px;font-size:16px;line-height:24px;height:24px;color:#868a91;letter-spacing:0.604px;">Drop files here to open them</div>
<!--DEVICE-->
<div class="abs" style="left:1015px;top:78px;width:230px;height:28px;border-radius:6px;background:#2b2d30;border:1px solid #45474d"></div>
<svg style="left:1025px;top:85px;" width="16" height="16" viewBox="0 0 16 16" fill="none"><rect x="2.1" y="1.9" width="7.8" height="11" rx=".3" stroke="#ced0d6" stroke-width="1.15"/><path d="M4.6 2.2 H7.4" stroke="#ced0d6" stroke-width="1.5"/><circle cx="12.1" cy="13.3" r="2" fill="#1fc41f"/></svg>
<div class="t" style="left:1043.4px;top:83.0px;font-size:13.3px;line-height:20px;height:20px;color:#dfe1e5;letter-spacing:0.275px;">Samsung SM-N960U API 29</div>
<svg style="left:1229px;top:87px;" width="10" height="10" viewBox="0 0 10 10" fill="none"><path d="M1.6 1.6 L8.4 8.4 M8.4 1.6 L1.6 8.4" stroke="#6f7279" stroke-width="1.1" stroke-linecap="round"/></svg>
<svg style="left:1254px;top:85px;" width="15" height="15" viewBox="0 0 15 15" fill="none"><path d="M7.5 1 V14 M1 7.5 H14" stroke="#ced0d6" stroke-width="1.25"/></svg>
<svg style="left:2137px;top:84px;" width="16" height="16" viewBox="0 0 16 16" fill="none"><g stroke="#ced0d6" stroke-width="1.25" stroke-linecap="round" stroke-linejoin="round" fill="none"><path d="M7 2.6 H3.4 A1 1 0 0 0 2.4 3.6 V12.4 A1 1 0 0 0 3.4 13.4 H12.2 A1 1 0 0 0 13.2 12.4 V8.8"/><path d="M9.6 2.4 H13.4 V6.2 M13.2 2.6 L8 7.8"/></g></svg>
<svg style="left:2169px;top:84px;" width="4" height="16" viewBox="0 0 4 16" fill="none"><rect x="1" y="1.6" width="2" height="2" fill="#ced0d6"/><rect x="1" y="7" width="2" height="2" fill="#ced0d6"/><rect x="1" y="12.4" width="2" height="2" fill="#ced0d6"/></svg>
<svg style="left:2190px;top:91px;" width="14" height="3" viewBox="0 0 14 3" fill="none"><rect x="0.4" y="0.6" width="13" height="1.3" fill="#ced0d6"/></svg>
<div class="abs" style="left:1006px;top:112px;width:1213px;height:1px;background:#2b2d30"></div>
<div class="abs" style="left:1006px;top:147px;width:1213px;height:1px;background:#2b2d30"></div>
<div class="abs" style="left:1095px;top:120px;width:1px;height:20px;background:#393b40"></div>
<div class="abs" style="left:1154px;top:120px;width:1px;height:20px;background:#393b40"></div>
<div class="abs" style="left:1239px;top:120px;width:1px;height:20px;background:#393b40"></div>
<div class="abs" style="left:1272px;top:120px;width:1px;height:20px;background:#393b40"></div>
<div class="abs" style="left:1331px;top:120px;width:1px;height:20px;background:#393b40"></div>
<svg style="left:1019px;top:122px;" width="16" height="16" viewBox="0 0 16 16" fill="none"><g stroke="#ced0d6" stroke-width="1.25" stroke-linecap="round" stroke-linejoin="round" fill="none"><path d="M5.6 3.6 A5.9 5.9 0 1 0 10.4 3.6"/></g><path d="M8.2 2.2 V8.2" stroke="#9a9da4" stroke-width="1.3" stroke-linecap="round"/></svg>
<svg style="left:1044px;top:122px;" width="18" height="16" viewBox="0 0 18 16" fill="none"><g stroke="#ced0d6" stroke-width="1.25" stroke-linecap="round" stroke-linejoin="round" fill="none"><path d="M2.2 6 H4.6 L8.6 2.6 V13.4 L4.6 10 H2.2 Z"/><path d="M10.6 5.4 A3.6 3.6 0 0 1 10.6 10.6 M12.4 3 A6.6 6.6 0 0 1 12.4 13"/></g></svg>
<svg style="left:1070px;top:122px;" width="16" height="16" viewBox="0 0 16 16" fill="none"><g stroke="#ced0d6" stroke-width="1.25" stroke-linecap="round" stroke-linejoin="round" fill="none"><path d="M2.4 6 H4.8 L8.8 2.6 V13.4 L4.8 10 H2.4 Z"/><path d="M10.8 5.4 A3.6 3.6 0 0 1 10.8 10.6"/></g></svg>
<svg style="left:1103px;top:122px;" width="18" height="16" viewBox="0 0 18 16" fill="none"><g stroke="#ced0d6" stroke-width="1.25" stroke-linecap="round" stroke-linejoin="round" fill="none"><rect x="2.3" y="2.6" width="7.4" height="11" rx=".6"/><path d="M5 4.7 H7"/></g><g stroke="#548af7" stroke-width="1.25" stroke-linecap="round" stroke-linejoin="round" fill="none"><path d="M11.6 13.6 C16.4 12.2 17.2 6.4 13 3.2 M12.4 6.2 L12.7 3 L16 3.2"/></g></svg>
<svg style="left:1129px;top:122px;" width="18" height="16" viewBox="0 0 18 16" fill="none"><g stroke="#ced0d6" stroke-width="1.25" stroke-linecap="round" stroke-linejoin="round" fill="none"><rect x="8.4" y="2.6" width="7.4" height="11" rx=".6"/><path d="M11.2 4.7 H13.2"/></g><g stroke="#548af7" stroke-width="1.25" stroke-linecap="round" stroke-linejoin="round" fill="none"><path d="M6.4 13.6 C1.6 12.2 .8 6.4 5 3.2 M5.6 6.2 L5.3 3 L2 3.2"/></g></svg>
<svg style="left:1165px;top:124px;" width="12" height="12" viewBox="0 0 12 12" fill="none"><g stroke="#ced0d6" stroke-width="1.25" stroke-linecap="round" stroke-linejoin="round" fill="none"><path d="M9.6 2.2 V10 L2.4 6.1 Z"/></g></svg>
<svg style="left:1190px;top:123px;" width="14" height="14" viewBox="0 0 14 14" fill="none"><circle cx="7" cy="7" r="4.9" stroke="#ced0d6" stroke-width="1.25"/></svg>
<svg style="left:1217px;top:124px;" width="12" height="12" viewBox="0 0 12 12" fill="none"><rect x="2.6" y="2.7" width="7" height="6.6" stroke="#ced0d6" stroke-width="1.25"/></svg>
<svg style="left:1247px;top:122px;" width="18" height="16" viewBox="0 0 18 16" fill="none"><g stroke="#ced0d6" stroke-width="1.25" stroke-linecap="round" stroke-linejoin="round" fill="none"><path d="M10 11 H3.6 A1.2 1.2 0 0 1 2.4 9.8 V4 A1.2 1.2 0 0 1 3.6 2.8 H13.6 A1.2 1.2 0 0 1 14.8 4 V7"/><rect x="11.5" y="8.6" width="4.2" height="5.8" rx="2.1"/><path d="M13.6 9 V11"/><path d="M6 8.8 H9.4"/></g><rect x="4.6" y="4.3" width="1.1" height="1.1" fill="#ced0d6"/><rect x="6.8" y="4.3" width="1.1" height="1.1" fill="#ced0d6"/><rect x="9" y="4.3" width="1.1" height="1.1" fill="#ced0d6"/><rect x="11.2" y="4.3" width="1.1" height="1.1" fill="#ced0d6"/><rect x="4.6" y="6.3" width="1.1" height="1.1" fill="#ced0d6"/><rect x="6.8" y="6.3" width="1.1" height="1.1" fill="#ced0d6"/><rect x="9" y="6.3" width="1.1" height="1.1" fill="#ced0d6"/><rect x="11.2" y="6.3" width="1.1" height="1.1" fill="#ced0d6"/></svg>
<svg style="left:1281px;top:122px;" width="16" height="16" viewBox="0 0 16 16" fill="none"><path d="M1.4 4.6 V1.4 H4.8 M11.2 1.4 H14.6 V4.6 M14.6 11.4 V14.6 H11.2 M4.8 14.6 H1.4 V11.4" stroke="#ced0d6" stroke-width="1.25" stroke-linejoin="miter" fill="none"/><g stroke="#ced0d6" stroke-width="1.25" stroke-linecap="round" stroke-linejoin="round" fill="none"><path d="M3.6 5.6 H5.2 L6 4.4 H10 L10.8 5.6 H12.4 A.6 .6 0 0 1 13 6.2 V11 A.6 .6 0 0 1 12.4 11.6 H3.6 A.6 .6 0 0 1 3 11 V6.2 A.6 .6 0 0 1 3.6 5.6 Z"/><circle cx="8" cy="8.4" r="1.7"/></g></svg>
<svg style="left:1307px;top:122px;" width="16" height="16" viewBox="0 0 16 16" fill="none"><path d="M1.4 4.6 V1.4 H4.8 M11.2 1.4 H14.6 V4.6 M14.6 11.4 V14.6 H11.2 M4.8 14.6 H1.4 V11.4" stroke="#ced0d6" stroke-width="1.25" stroke-linejoin="miter" fill="none"/><circle cx="8" cy="8" r="3.8" fill="#4a2b2e" stroke="#e0545f" stroke-width="1.2"/></svg>
<svg style="left:1340px;top:122px;" width="16" height="16" viewBox="0 0 16 16" fill="none"><path d="M2.6 10.2 V13.6 H13.6 V10.2" stroke="#ced0d6" stroke-width="1.25" fill="none"/><path d="M8.1 11 V3 M5.2 5.6 L8.1 2.6 L11 5.6" stroke="#8b8e95" stroke-width="1.5" fill="none" stroke-linejoin="round"/></svg>
<svg style="left:1366px;top:122px;" width="16" height="16" viewBox="0 0 16 16" fill="none"><path d="M2.6 10.2 V13.6 H13.6 V10.2" stroke="#ced0d6" stroke-width="1.25" fill="none"/><path d="M8.1 2.4 V10.4 M5.2 7.8 L8.1 10.8 L11 7.8" stroke="#8b8e95" stroke-width="1.5" fill="none" stroke-linejoin="round"/></svg>
<svg style="left:2189px;top:122px;" width="18" height="17" viewBox="0 0 18 17" fill="none"><g stroke="#ced0d6" stroke-width="1.25" stroke-linecap="round" stroke-linejoin="round" fill="none"><path d="M4.4 10.6 H2.4 V1.8 H11.6 V3.6"/><path d="M9 12.6 H4.6 V4 H14.2 V8"/><circle cx="12.6" cy="11.4" r="2.6"/><path d="M14.6 13.4 L16.6 15.4"/></g></svg>
<div id="phone" class="abs" style="left:1364px;top:148px;width:497px;height:1023px;overflow:hidden;background:linear-gradient(180deg,#0a0e56 0.00%,#0c125b 5.08%,#121a66 10.95%,#1b2475 17.79%,#26317f 24.63%,#383f8f 31.48%,#4f5199 39.30%,#66649c 46.14%,#847698 53.96%,#9e868e 61.78%,#b8917a 69.60%,#cc9762 77.42%,#d89850 85.24%,#e0953c 93.06%,#e5952f 100.00%)">
<div class="t" style="left:25.8px;top:1.9px;font-size:17.4px;line-height:26px;height:26px;color:#d9dae8;letter-spacing:0.191px;">Airplane mode</div>
<div class="t" style="left:26.3px;top:99.6px;font-size:49.2px;line-height:62px;height:62px;color:#fff;transform-origin:0 0;transform:scaleX(.896);-webkit-text-stroke:1.2px #151b6b;letter-spacing:0px">12:25</div>
<div class="t" style="left:29.8px;top:158.3px;font-size:39.3px;line-height:50px;height:50px;color:#fff;transform-origin:0 0;transform:scaleX(.929);-webkit-text-stroke:.9px #1d2376">Thu, March 19</div>
<div class="abs" style="left:29px;top:232px;width:159px;height:45px;border-radius:23px;background:rgba(255,255,255,.17)"></div>
<svg style="left:45px;top:242px;" width="25" height="25" viewBox="0 0 25 25" fill="none"><g stroke="#fbfbfd" stroke-width="2.9" stroke-linecap="round" fill="none"><path d="M10.4 2.4 A6.4 6.4 0 0 1 16.8 8.8"/><path d="M22.6 10.4 A6.4 6.4 0 0 1 16.2 16.8"/><path d="M14.6 22.6 A6.4 6.4 0 0 1 8.2 16.2"/><path d="M2.4 14.6 A6.4 6.4 0 0 1 8.8 8.2"/></g></svg>
<svg style="left:79px;top:242px;" width="25" height="25" viewBox="0 0 25 25" fill="none"><circle cx="12.5" cy="12.2" r="8.4" stroke="#9a9dc4" stroke-width="5" stroke-dasharray="1.9 .74" fill="none"/></svg>
<svg style="left:115px;top:244px;" width="22" height="21" viewBox="0 0 22 21" fill="none"><path fill-rule="evenodd" d="M2.2 1.1 H18.2 A1.3 1.3 0 0 1 19.5 2.4 V18 A1.3 1.3 0 0 1 18.2 19.3 H2.2 A1.3 1.3 0 0 1 .9 18 V2.4 A1.3 1.3 0 0 1 2.2 1.1 Z M3 3.2 V14.6 L7.6 11 L10.4 13.2 L14.8 9 L17.4 11.4 V3.2 Z" fill="#fbfbfd"/><circle cx="6.6" cy="7" r="1.9" fill="#fbfbfd"/></svg>
<svg style="left:150px;top:244px;" width="20" height="21" viewBox="0 0 20 21" fill="none"><path fill-rule="evenodd" d="M2.4 .7 H11.6 L17.9 7 V18.6 A1.3 1.3 0 0 1 16.6 19.9 H2.4 A1.3 1.3 0 0 1 1.1 18.6 V2 A1.3 1.3 0 0 1 2.4 .7 Z" fill="#fbfbfd"/><path d="M6 8.2 L12.8 15 M12.8 8.2 L6 15" stroke="#3d4391" stroke-width="2.5"/></svg>
<svg style="left:397px;top:6px;" width="18" height="18" viewBox="0 0 18 18" fill="none"><path d="M1.2 6.4 H3.6 L9.4 1.8 V16 L3.6 11.6 H1.2 Z" fill="#d6d7e6"/><path d="M1.6 1.6 L10.6 12.6" stroke="#0b0f59" stroke-width="2.2"/><path d="M2.8 1.8 L10.4 11" stroke="#d6d7e6" stroke-width="1.3"/><path d="M14.2 1.8 L12.2 4 L14.4 6.2 L12.2 8.4 L14.4 10.8 L12.2 13 L14.2 15.6" stroke="#d6d7e6" stroke-width="1.6" stroke-linejoin="round" fill="none"/></svg>
<svg style="left:417px;top:6px;" width="22" height="16" viewBox="0 0 22 16" fill="none"><g stroke="#d6d7e6" stroke-width="1.5" fill="none" stroke-linecap="round"><path d="M1.8 5.4 A11 11 0 0 1 16.8 5.4"/><path d="M4 8 A7.6 7.6 0 0 1 14.6 8"/><path d="M6.4 10.6 A4.2 4.2 0 0 1 12.2 10.6"/></g><circle cx="9.3" cy="12.8" r="1.3" fill="#d6d7e6"/><path d="M12.6 12 H14.2 V10 H15.4 V12 H16.6 L14.8 14.4 Z" fill="#6d70a8"/><path d="M16.6 11.4 L18.2 9 L19.8 11.4 H18.8 V13.6 H17.6 V11.4 Z" fill="#8d90bd"/></svg>
<svg style="left:441px;top:6px;" width="17" height="17" viewBox="0 0 17 17" fill="none"><path d="M8.3 1.2 C9.1 1.2 9.5 2 9.5 3 V6.6 L15.4 10.4 V12 L9.5 10.2 V13.4 L11.4 14.8 V16 L8.3 15.2 L5.2 16 V14.8 L7.1 13.4 V10.2 L1.2 12 V10.4 L7.1 6.6 V3 C7.1 2 7.5 1.2 8.3 1.2 Z" fill="#d6d7e6"/></svg>
<svg style="left:461px;top:6px;" width="12" height="17" viewBox="0 0 12 17" fill="none"><path d="M3.6 1.4 H8.6 V3 H11 V10.2 H1 V3 H3.6 Z" fill="#555990"/><rect x="1" y="10.2" width="10" height="5.8" fill="#d6d7e6"/><path d="M6.6 4.4 L3.8 9.4 H5.8 L4.6 13.6 L8 8 H6 Z" fill="#e6e7f2"/><path d="M5.6 10.2 L4.6 13.6 L6.8 10.2 Z" fill="#1a1e60"/></svg>
<div class="abs" style="left:492.4px;top:343.6px;width:6px;height:157.6px;border-radius:3px 0 0 3px;background:rgba(255,255,255,.32);border:1px solid rgba(255,255,255,.16);border-right:0"></div>
<div class="t" style="left:175.8px;top:871.0px;font-size:20.3px;line-height:30px;height:30px;color:#fbf3ea;letter-spacing:0.287px;text-shadow:0 1px 2px rgba(90,50,0,.45);">Swipe to unlock</div>
<svg style="left:29px;top:957px;" width="42" height="42" viewBox="0 0 42 42" fill="none"><path d="M21 .4 C36 .4 41.4 6 41.4 21 C41.4 36 36 41.6 21 41.6 C6 41.6 .4 36 .4 21 C.4 6 6 .4 21 .4 Z" fill="#45b164"/><path d="M24.4 9 C18.6 9 14.2 12.4 14.2 21 C14.2 29.6 18.6 33 24.4 33 C25.8 33 26.6 32.2 26.6 31 V27.6 C26.6 26.2 25.6 25.6 24.4 25.8 C21.4 26.2 19.8 25 19.8 21 C19.8 17 21.4 15.8 24.4 16.2 C25.6 16.4 26.6 15.8 26.6 14.4 V11 C26.6 9.8 25.8 9 24.4 9 Z" fill="#f6ead9"/></svg>
<svg style="left:426.5px;top:957px;" width="42" height="42" viewBox="0 0 42 42" fill="none"><path d="M21 .4 C36 .4 41.4 6 41.4 21 C41.4 36 36 41.6 21 41.6 C6 41.6 .4 36 .4 21 C.4 6 6 .4 21 .4 Z" fill="#e8303f"/><rect x="8.4" y="12.4" width="25" height="17.2" rx="4.4" fill="#f8e9dc"/><circle cx="20.8" cy="21" r="4" fill="#b3202c"/><circle cx="28.4" cy="16.8" r="2" fill="#e8303f"/></svg>
</div>
<div class="abs" style="left:2175px;top:1043px;width:28px;height:108px;border-radius:5px;border:1px solid #3a3c41;background:#191a1c"></div>
<svg style="left:2181px;top:1050px;" width="16" height="16" viewBox="0 0 16 16" fill="none"><path d="M8 1.4 V14.4 M1.5 7.9 H14.5" stroke="#ced0d6" stroke-width="1.15"/></svg>
<svg style="left:2181px;top:1082px;" width="16" height="3" viewBox="0 0 16 3" fill="none"><rect x="1.4" y="1" width="13" height="1" fill="#5a5d63"/></svg>
<div class="t" style="left:2181.9px;top:1101.2px;font-size:12.2px;line-height:18px;height:18px;font-weight:700;color:#dfe1e5;transform-origin:0 50%;transform:scaleX(.79)">1:1</div>
<svg style="left:2181px;top:1129px;" width="16" height="14" viewBox="0 0 16 14" fill="none"><rect x="1.5" y="1.7" width="13" height="11" rx="1.2" stroke="#5a5d63" stroke-width="1.1" fill="none"/><path d="M4 7 V4.6 H6.8 M12 7.4 V9.8 H9.2" stroke="#5a5d63" stroke-width="1.1" fill="none"/></svg>
<!--RIGHTSTRIPE-->
<svg style="left:2229px;top:80px;" width="20" height="20" viewBox="0 0 20 20" fill="none"><g stroke="#9a9da4" stroke-width="1.5" stroke-linecap="round" stroke-linejoin="round" fill="none"><path d="M2.2 14.6 H17.8 L15.8 11.4 V7.6 A5.8 5.8 0 0 0 4.2 7.6 V11.4 Z"/></g><path d="M8 17.2 H12 L10 18.8 Z" fill="#9a9da4"/></svg>
<svg style="left:2227px;top:121px;" width="24" height="18" viewBox="0 0 24 18" fill="none"><g stroke="#9a9da4" stroke-width="1.5" stroke-linecap="round" stroke-linejoin="round" fill="none">
<path d="M2.4 15.6 C1.8 10.2 4.4 5.6 10.2 5.2 C12.8 5 14.8 5.8 15.8 7.4 C18 7.2 19.8 5.6 19.4 3.6 C19 2 17 2 16.6 3.2"/>
<path d="M2.4 15.6 H5 C5.4 14.2 6.6 14.2 7 15.6 H9.8 C10.2 14.2 11.4 14.2 11.8 15.6 H13.8 C15.6 14 16.4 12.4 16.2 10.2 C19 9.6 20.6 7.8 20.4 5"/>
<path d="M5.6 9.4 C7 11 9 11 10.6 9.4"/></g><circle cx="13" cy="8" r=".75" fill="#9a9da4"/></svg>
<svg style="left:2229px;top:161px;" width="20" height="18" viewBox="0 0 20 18" fill="none"><g stroke="#9a9da4" stroke-width="1.5" stroke-linecap="round" stroke-linejoin="round" fill="none"><path d="M5.6 15.6 H3.4 A1.2 1.2 0 0 1 2.2 14.4 V2.8 A1.2 1.2 0 0 1 3.4 1.6 H11 A1.2 1.2 0 0 1 12.2 2.8 V7.2"/><path d="M6 4.4 H8.4"/><path d="M7.4 16.4 A5.8 5.8 0 0 1 18.6 16.4 Z"/><path d="M9.8 11 L8.8 9.4 M16.2 11 L17.2 9.4"/></g></svg>
<div class="abs" style="left:2224px;top:195px;width:30px;height:30px;border-radius:7px;background:#37393e"></div>
<svg style="left:2229px;top:201px;" width="20" height="20" viewBox="0 0 20 20" fill="none"><g stroke="#9a9da4" stroke-width="1.5" stroke-linecap="round" stroke-linejoin="round" fill="none"><path d="M5 15.4 H3.4 A1.2 1.2 0 0 1 2.2 14.2 V3 A1.2 1.2 0 0 1 3.4 1.8 H10.2"/><path d="M5.4 4.6 H8"/><path d="M9.4 4.6 V3.4" stroke-width="1.2"/><rect x="7" y="9.4" width="10.6" height="4.6"/><path d="M6.2 17.4 H18.4"/></g><circle cx="16.6" cy="2.7" r="3.7" fill="#4f8e52"/></svg>
<svg style="left:2229px;top:239px;" width="22" height="22" viewBox="0 0 22 22" fill="none"><g stroke="#9a9da4" stroke-width="1.5" stroke-linecap="round" stroke-linejoin="round" fill="none"><path d="M6.4 8 H3.4 A1.4 1.4 0 0 0 2 9.4 V17.6 L5 15.4 H10"/><path d="M19 11 V3.4 A1.4 1.4 0 0 0 17.6 2 H8 A1.4 1.4 0 0 0 6.6 3.4 V10 A1.4 1.4 0 0 0 8 11.4 H11.6"/></g><path d="M16 11.4 C16.4 14 17.2 14.8 19.8 15.2 C17.2 15.6 16.4 16.4 16 19 C15.6 16.4 14.8 15.6 12.2 15.2 C14.8 14.8 15.6 14 16 11.4 Z" fill="#9a9da4"/></svg>
<!--STATUS-->
<svg style="left:14px;top:1180px;" width="16" height="14" viewBox="0 0 16 14" fill="none"><rect x="1.2" y="1.4" width="13.4" height="11" rx="1.6" fill="#25324d" stroke="#548af7" stroke-width="1.1"/><rect x="3.2" y="3.6" width="1.6" height="1" fill="#548af7"/><rect x="5.8" y="3.6" width="1.6" height="1" fill="#548af7"/></svg>
<div class="t" style="left:34.4px;top:1178.2px;font-size:13.5px;line-height:20px;height:20px;color:#9da0a8;letter-spacing:0.062px;">Mobile_Gaming_Application</div>
<svg style="left:2225px;top:1179px;" width="18" height="18" viewBox="0 0 18 18" fill="none"><g fill="#ced0d6"><rect x="1" y="5.4" width="8.6" height="1.5"/><rect x="1" y="9.4" width="11" height="1.5"/><rect x="1" y="13.2" width="6" height="1.5"/></g><circle cx="12.6" cy="4.4" r="2.9" stroke="#ced0d6" stroke-width="1"/><path d="M10.6 6.4 L14.6 2.4" stroke="#ced0d6" stroke-width="1"/></svg>
<div class="abs" style="left:1px;top:1203px;width:19px;height:4px;background:#d9367b"></div>
<div class="abs" style="left:2239px;top:1203px;width:19px;height:4px;background:#d9367b"></div>
</body>
</html>
